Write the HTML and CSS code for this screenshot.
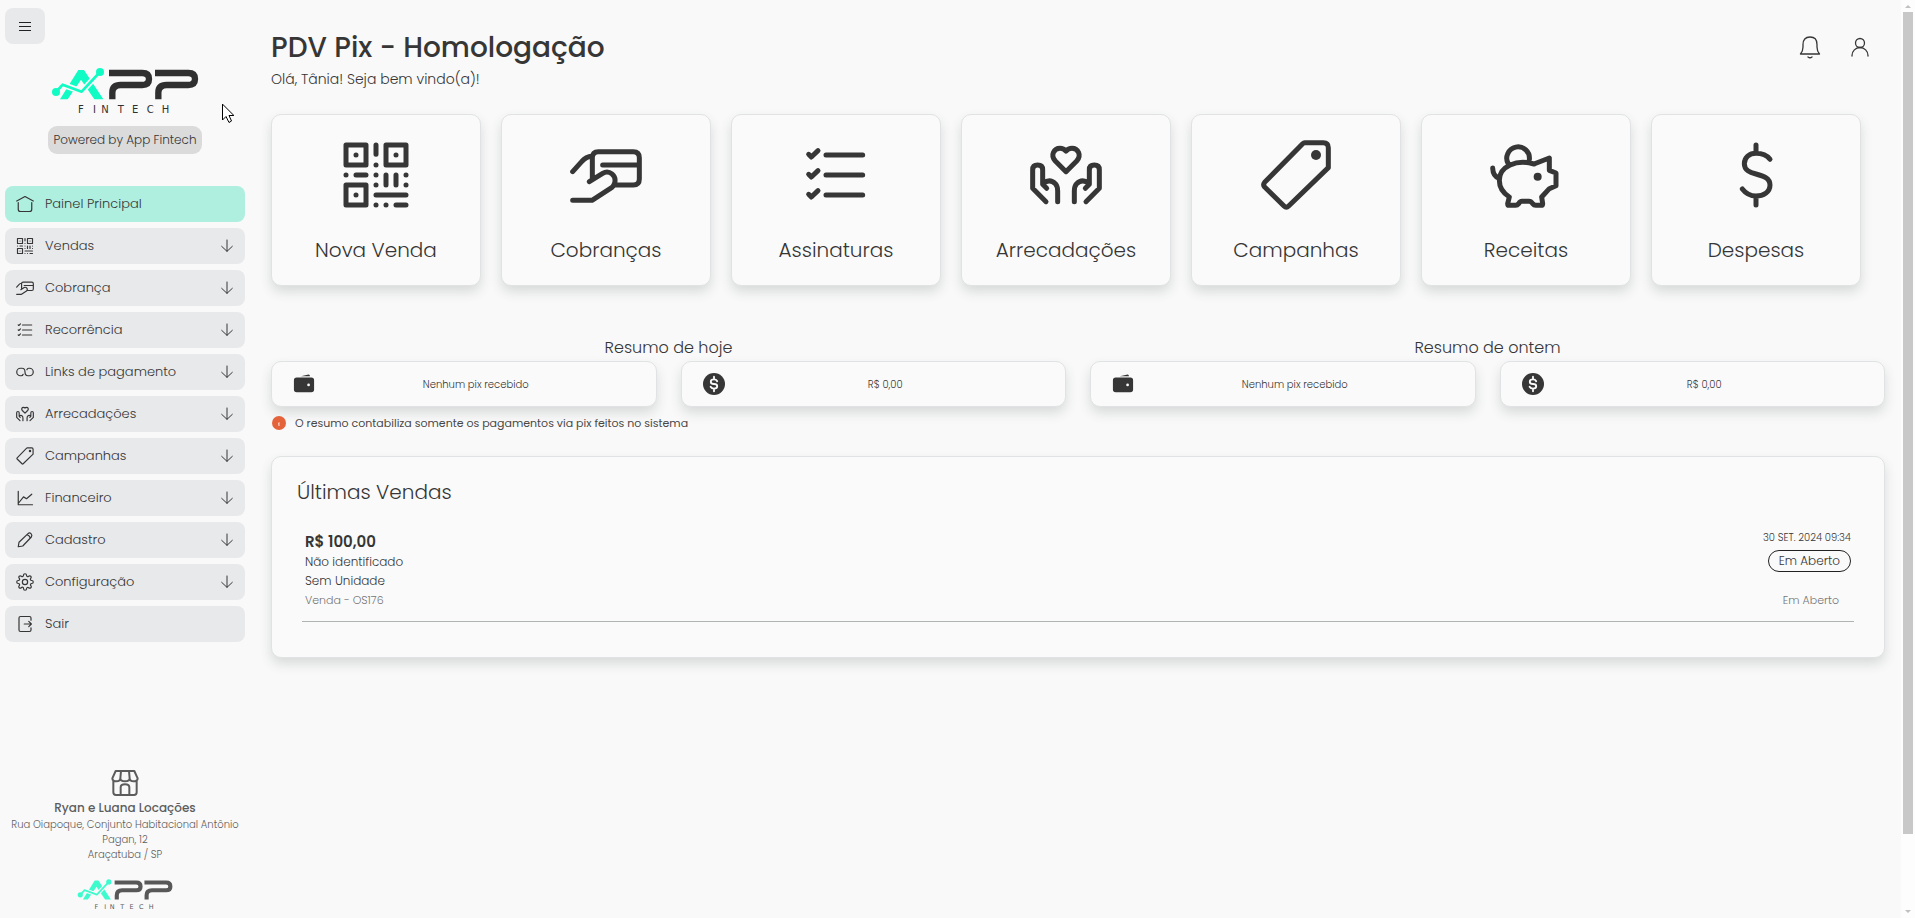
FILE: index.html
```
<!DOCTYPE html>
<html lang="pt-BR">
<head>
<meta charset="utf-8">
<meta name="viewport" content="width=device-width, initial-scale=1">
<title>PDV Pix - Homologação</title>
<link rel="stylesheet" href="styles.css">
</head>
<body>
<svg class="sprite" aria-hidden="true">
  <symbol id="qr" viewBox="0 0 216 216"><path d="M18 18H78V78H18ZM138 18H198V78H138ZM18 138H78V198H18ZM48 48h.1M168 48h.1M48 168h.1M108 18V46M108 78h.1M18 108h.1M48 108H78M108 108h.1M198 108h.1M138 108V138M168 108V138M108 138h.1M198 138h.1M108 168H198M108 198h.1M138 198h.1M168 198H198"/></symbol>
  <symbol id="card" viewBox="0 0 216 216"><path d="M8 98 35 68Q47 53 67 51M67 120V56Q67 38 85 38H190Q208 38 208 56V120Q208 138 190 138H135M98 78H208M58 128 98 103C118 91 140 110 134 132Q132 140 126 145L66 184H8"/></symbol>
  <symbol id="list" viewBox="0 0 216 216"><path d="M26 46 34 54 54 35M78 48H188M26 106 34 114 54 95M78 108H188M26 166 34 174 54 155M78 168H188"/></symbol>
  <symbol id="hands" viewBox="0 0 216 216"><path d="M108 98 76 66C60 48 72 28 90 28Q101 28 108 36Q115 28 126 28C144 28 156 48 140 66ZM48 188 8 148V92Q8 78 23 78Q38 78 38 92V136L50 148M40 132Q60 118 76 134Q83 142 83 156V188M168 188 208 148V92Q208 78 193 78Q178 78 178 92V136L166 148M176 132Q156 118 140 134Q133 142 133 156V188"/></symbol>
  <symbol id="tag" viewBox="0 0 216 216"><path d="M134 11H190Q205 11 205 26V86L86 201Q79 208 72 201L14 144Q8 137 14 130L128 14Q131 11 134 11Z"/><circle class="solid" cx="168" cy="48" r="15"/></symbol>
  <symbol id="pig" viewBox="0 0 216 216"><path d="M55 75A34 34 0 1 1 118 62M8 87Q9 112 27 118M132 75 178 57V94L198 102V140L178 149L155 174L158 194Q158 199 153 199H137Q132 199 128 194Q123 187 117 187H96Q90 187 86 194Q82 199 77 199H57Q53 199 53 194L58 174C42 164 28 146 28 124C28 82 80 60 132 75"/><circle class="solid" cx="143" cy="113" r="12"/></symbol>
  <symbol id="dollar" viewBox="0 0 216 216"><path d="M108 18V43M108 171V198M150 61C140 48 125 43 108 43C88 43 73 55 73 74C73 94 90 100 108 105C130 111 150 117 150 138C150 160 130 171 108 171C92 171 77 163 67 150"/></symbol>
  <symbol id="home" viewBox="0 0 24 24"><path d="M1 8 12 2 23 8M3 10V19Q3 22 6 22H18Q21 22 21 19V10"/></symbol>
  <symbol id="link" viewBox="0 0 24 24"><path d="M7 17H6A5 5 0 0 1 6 7H8C11 7 12 9 12 12S13 17 16 17H18A5 5 0 0 0 18 7H17Q15 7 14.500 9M7 17Q9 17 9.500 15"/></symbol>
  <symbol id="chart" viewBox="0 0 24 24"><path d="M3 3V21H22M4 18 10 10.500 14 13 21 7"/></symbol>
  <symbol id="pencil" viewBox="0 0 24 24"><path d="M3 21 4 15 16 3.500Q18 1.500 20 3.500T20.500 8L9 20ZM14.500 5Q18 5.500 19 9.500"/></symbol>
  <symbol id="gear" viewBox="0 0 24 24"><circle cx="12" cy="12" r="3.500"/><path d="M19.400 15a1.650 1.650 0 0 0 .33 1.820l.06.06a2 2 0 1 1-2.830 2.830l-.06-.06a1.650 1.650 0 0 0-2.800 1.170V21a2 2 0 0 1-4 0v-.09A1.650 1.650 0 0 0 7.200 19.600l-.06.06a2 2 0 1 1-2.830-2.830l.06-.06a1.650 1.650 0 0 0-1.280-2.770H3a2 2 0 0 1 0-4h.09A1.650 1.650 0 0 0 4.400 7.200l-.06-.06a2 2 0 1 1 2.830-2.830l.06.06A1.650 1.650 0 0 0 10 3.090V3a2 2 0 0 1 4 0v.09a1.650 1.650 0 0 0 2.770 1.280l.06-.06a2 2 0 1 1 2.830 2.830l-.06.06A1.650 1.650 0 0 0 20.910 10H21a2 2 0 0 1 0 4h-.09a1.650 1.650 0 0 0-1.510 1Z"/></symbol>
  <symbol id="exit" viewBox="0 0 24 24"><path d="M20 7V4Q20 2 18 2H6Q4 2 4 4V20Q4 22 6 22H18Q20 22 20 20V17M11 12H20M17 8.500 20.500 12 17 15.500"/></symbol>
  <symbol id="down" viewBox="0 0 24 24"><path d="M12 3V20M4 12.500 12 20 20 12.500"/></symbol>
  <symbol id="wallet" viewBox="0 0 24 24"><path class="solid" d="M8.500 3.500 17 1.500Q18.500 1.500 18.500 3.500ZM4 5H20Q23 5 23 8V18Q23 21 20 21H4Q1 21 1 18V8Q1 5 4 5Z"/><circle class="hole" cx="17" cy="13" r="1.500"/></symbol>
  <symbol id="coin" viewBox="0 0 24 24"><circle class="solid" cx="12" cy="12" r="12"/><path class="cut" d="M12 4V7M12 17V20M15.500 9Q14.500 7 12 7Q8.500 7 8.500 9.500T12 12T15.500 14.500T12 17Q9.500 17 8.300 15"/></symbol>
  <symbol id="logo" viewBox="0 0 450 162">
    <path class="teal" d="M85 12H102L160 100H133L93 41L53 100H30Z"/>
    <path class="gap" d="M18 78 38 56 95 77 150 18"/>
    <path class="trend" d="M18 78 38 56 95 77 150 18"/>
    <circle class="teal" cx="18" cy="78" r="12"/><circle class="teal" cx="150" cy="18" r="12"/>
    <path class="mark" d="M177 21H277Q297 21 297 39Q297 57 277 57H212Q187 57 187 80V100M315 21H415Q435 21 435 39Q435 57 415 57H350Q325 57 325 80V100"/>
    <text class="wordmark" y="142" x="84 129 154 203 246 290 335">FINTECH</text>
  </symbol>
</svg>

<div class="app">
  <aside class="sidebar">
    <button class="toggle" aria-label="Abrir menu"><svg viewBox="0 0 12 9"><path d="M0 .5H12M0 4.500H12M0 8.500H12"/></svg></button>
    <div class="brand">
      <svg class="logo" role="img" aria-label="App Fintech"><use href="#logo"/></svg>
      <span class="powered">Powered by App Fintech</span>
    </div>
    <nav class="menu">
      <a class="item active" href="#"><svg class="icon"><use href="#home"/></svg><span>Painel Principal</span></a>
      <button class="item"><svg class="icon wide"><use href="#qr"/></svg><span>Vendas</span><svg class="arrow"><use href="#down"/></svg></button>
      <button class="item"><svg class="icon wide"><use href="#card"/></svg><span>Cobrança</span><svg class="arrow"><use href="#down"/></svg></button>
      <button class="item"><svg class="icon wide"><use href="#list"/></svg><span>Recorrência</span><svg class="arrow"><use href="#down"/></svg></button>
      <button class="item"><svg class="icon"><use href="#link"/></svg><span>Links de pagamento</span><svg class="arrow"><use href="#down"/></svg></button>
      <button class="item"><svg class="icon wide"><use href="#hands"/></svg><span>Arrecadações</span><svg class="arrow"><use href="#down"/></svg></button>
      <button class="item"><svg class="icon wide"><use href="#tag"/></svg><span>Campanhas</span><svg class="arrow"><use href="#down"/></svg></button>
      <button class="item"><svg class="icon"><use href="#chart"/></svg><span>Financeiro</span><svg class="arrow"><use href="#down"/></svg></button>
      <button class="item"><svg class="icon"><use href="#pencil"/></svg><span>Cadastro</span><svg class="arrow"><use href="#down"/></svg></button>
      <button class="item"><svg class="icon"><use href="#gear"/></svg><span>Configuração</span><svg class="arrow"><use href="#down"/></svg></button>
      <a class="item" href="#"><svg class="icon"><use href="#exit"/></svg><span>Sair</span></a>
    </nav>
    <footer class="store">
      <svg class="shop" viewBox="0 0 84 78"><path d="M14 3H70L80 25Q80 34 68 34Q56 34 56 25Q56 34 42 34Q28 34 28 25Q28 34 16 34Q4 34 4 25ZM30 3 28 25M54 3 56 25M7 31V67Q7 75 15 75H69Q77 75 77 67V31M29 75V52Q29 43 42 43Q55 43 55 52V75"/></svg>
      <strong>Ryan e Luana Locações</strong>
      <p>Rua Oiapoque, Conjunto Habitacional Antônio Pagan, 12<br>Araçatuba / SP</p>
      <svg class="logo small" role="img" aria-label="App Fintech"><use href="#logo"/></svg>
    </footer>
    <svg class="pointer" viewBox="0 0 12 19" aria-hidden="true"><path d="M.5 .5V16L4 12.500 7 18.500 9.500 17 7 11.500H11.500Z"/></svg>
  </aside>

  <main class="main">
    <header class="top">
      <div>
        <h1>PDV Pix - Homologação</h1>
        <p>Olá, Tânia! Seja bem vindo(a)!</p>
      </div>
      <div class="actions">
        <button aria-label="Notificações"><svg viewBox="0 0 24 24"><path d="M2.500 19H21.500Q19 16 19 12V9.500Q19 2 12 2T5 9.500V12Q5 16 2.500 19ZM10 22Q12 23.500 14 22"/></svg></button>
        <button aria-label="Perfil"><svg viewBox="0 0 24 24"><circle cx="12" cy="8" r="4.500"/><path d="M4 21V20.500A8 8 0 0 1 20 20.500V21"/></svg></button>
      </div>
    </header>

    <section class="tiles" aria-label="Atalhos">
      <a class="box" href="#"><svg><use href="#qr"/></svg>Nova Venda</a>
      <a class="box" href="#"><svg><use href="#card"/></svg>Cobranças</a>
      <a class="box" href="#"><svg><use href="#list"/></svg>Assinaturas</a>
      <a class="box" href="#"><svg><use href="#hands"/></svg>Arrecadações</a>
      <a class="box" href="#"><svg><use href="#tag"/></svg>Campanhas</a>
      <a class="box" href="#"><svg><use href="#pig"/></svg>Receitas</a>
      <a class="box" href="#"><svg><use href="#dollar"/></svg>Despesas</a>
    </section>

    <div class="summaries">
      <section class="summary">
        <h2>Resumo de hoje</h2>
        <div class="box stat"><svg><use href="#wallet"/></svg><span>Nenhum pix recebido</span></div>
        <div class="box stat"><svg><use href="#coin"/></svg><span>R$ 0,00</span></div>
      </section>
      <section class="summary">
        <h2>Resumo de ontem</h2>
        <div class="box stat"><svg><use href="#wallet"/></svg><span>Nenhum pix recebido</span></div>
        <div class="box stat"><svg><use href="#coin"/></svg><span>R$ 0,00</span></div>
      </section>
    </div>
    <p class="note"><svg viewBox="0 0 14 14"><circle cx="7" cy="7" r="7"/><path d="M6 7 7.500 6V10H6.500Z"/></svg>O resumo contabiliza somente os pagamentos via pix feitos no sistema</p>

    <section class="box sales">
      <h2>Últimas Vendas</h2>
      <article class="sale">
        <div class="who">
          <strong>R$ 100,00</strong>
          <span>Não identificado</span>
          <span>Sem Unidade</span>
          <small>Venda - OS176</small>
        </div>
        <div class="state">
          <time datetime="2024-09-30T09:34">30 SET. 2024 09:34</time>
          <span class="badge">Em Aberto</span>
          <small>Em Aberto</small>
        </div>
      </article>
    </section>
  </main>

  <div class="scroll" aria-hidden="true"><i class="up"></i><div class="track"><div class="thumb"></div></div><i class="dn"></i></div>
</div>
</body>
</html>
```
FILE: styles.css
```
* { box-sizing: border-box; }

body {
  margin: 0;
  background: #f9f9f9;
  color: #363636;
  font-family: Poppins, Inter, "Liberation Sans", sans-serif;
  font-size: 13px;
  font-weight: 300;
}

h1, h2, p { margin: 0; font-weight: 300; }
a { color: inherit; text-decoration: none; }
button { border: 0; padding: 0; background: none; color: inherit; font: inherit; cursor: pointer; }
svg { flex: none; fill: none; stroke: #363636; stroke-linecap: round; stroke-linejoin: round; }
.sprite { position: absolute; width: 0; height: 0; }
.solid { fill: #363636; stroke: none; }
.hole { fill: #fafafa; stroke: none; }
.cut { stroke: #fafafa; stroke-width: 2; }

.app { display: flex; min-height: 100vh; }

/* Sidebar */
.sidebar {
  position: relative;
  display: flex;
  flex-direction: column;
  flex: none;
  width: 250px;
  padding: 8px 5px 5px;
}
.toggle {
  display: flex;
  align-items: center;
  justify-content: center;
  width: 40px;
  height: 36px;
  border-radius: 8px;
  background: #e8e9eb;
}
.toggle svg { width: 12px; height: 9px; stroke: #222; stroke-width: 1; stroke-linecap: butt; }
.brand { display: flex; flex-direction: column; align-items: center; margin: 22px 0 32px; }
.logo { width: 150px; height: 54px; }
.teal { fill: #10fcc4; stroke: none; }
.trend { stroke: #10fcc4; stroke-width: 8; }
.gap { stroke: #f9f9f9; stroke-width: 18; }
.mark { stroke: #303030; stroke-width: 19; stroke-linecap: butt; }
.wordmark { fill: #303030; stroke: none; font-family: "DejaVu Sans", sans-serif; font-size: 30px; font-weight: 400; }
.powered {
  margin-top: 6px;
  padding: 0 5px;
  border-radius: 9px;
  background: #dbdbdb;
  font-size: 12px;
  line-height: 28px;
}
.menu { display: flex; flex-direction: column; gap: 6px; }
.item {
  display: flex;
  align-items: center;
  gap: 11px;
  height: 36px;
  padding: 0 10px 0 11px;
  border-radius: 8px;
  background: #e8e9eb;
  text-align: left;
}
.item span { flex: 1; }
.active { background: #aeefdf; }
.icon { width: 18px; height: 18px; stroke-width: 1.600; }
.wide { stroke-width: 14; }
.arrow { width: 16px; height: 16px; stroke-width: 1.500; }
.store {
  display: flex;
  flex-direction: column;
  align-items: center;
  margin-top: auto;
  text-align: center;
  font-size: 10px;
  line-height: 15px;
  opacity: .8;
}
.store strong { margin: 4px 0 1px; font-size: 12px; line-height: 16px; font-weight: 500; }
.shop { width: 28px; height: 26px; stroke-width: 6; }
.small { width: 98px; height: 35px; margin-top: 16px; }
.pointer { position: absolute; left: 222px; top: 104px; width: 12px; height: 19px; fill: #fff; stroke: #000; }

/* Content */
.main { flex: 1; min-width: 0; padding: 30px 16px 40px 21px; }
.top { display: flex; justify-content: space-between; }
h1 { font-size: 28px; line-height: 36px; font-weight: 500; }
.top p { font-size: 14px; line-height: 20px; margin-top: 3px; }
.actions { display: flex; gap: 26px; padding: 5px 13px 0 0; align-self: flex-start; }
.actions svg { display: block; width: 24px; height: 24px; stroke-width: 1.300; }

.box {
  border: 1px solid #e1e2e3;
  border-radius: 10px;
  background: #fafafa;
  box-shadow: 0 6px 12px rgba(50, 60, 60, .16);
}
.tiles {
  display: grid;
  grid-template-columns: repeat(7, 1fr);
  gap: 20px;
  margin: 25px 24px 0 0;
}
.tiles .box {
  display: flex;
  flex-direction: column;
  align-items: center;
  padding: 24px 0 20px;
  font-size: 20px;
  line-height: 30px;
}
.tiles svg { width: 72px; height: 72px; margin-bottom: 24px; stroke-width: 15; }

.summaries { display: grid; grid-template-columns: 1fr 1fr; gap: 24px; margin-top: 49px; }
.summary { display: grid; grid-template-columns: 1fr 1fr; column-gap: 24px; }
.summary h2 { grid-column: 1 / -1; margin-bottom: 1px; text-align: center; font-size: 16px; line-height: 25px; }
.stat { display: flex; align-items: center; height: 46px; padding: 0 19px 0 21px; font-size: 10px; line-height: 16px; }
.stat svg { width: 22px; height: 22px; }
.stat span { flex: 1; padding-top: 1px; text-align: center; }
.note { display: flex; align-items: center; gap: 9px; margin-top: 8px; padding-left: 1px; color: #484848; font-size: 11px; line-height: 16px; font-weight: 400; }
.note svg { width: 14px; height: 14px; stroke: none; fill: #e4633a; }
.note path { fill: #fbd5c8; }

.sales { margin-top: 25px; padding: 20px 30px 35px 25px; }
.sales h2 { font-size: 20px; line-height: 30px; }
.sale {
  display: flex;
  justify-content: space-between;
  margin: 24px 0 0 5px;
  padding: 0 3px 11px;
  border-bottom: 1px solid #b0b3b3;
}
.who, .state { display: flex; flex-direction: column; font-size: 12px; }
.who { line-height: 19px; }
.who strong { font-size: 15px; line-height: 21px; font-weight: 600; }
.who small, .state small { font-size: 11px; color: #757575; line-height: 20px; }
.state { align-items: flex-end; }
.state time { font-size: 10px; line-height: 14px; }
.badge { margin-top: 5px; padding: 0 10px; border: 1px solid #222; border-radius: 11px; line-height: 20px; }
.state small { margin: auto 12px 0 0; }

/* Scroll bar */
.scroll { position: sticky; top: 0; display: flex; flex-direction: column; align-items: center; width: 14px; height: 100vh; padding: 5px 2px; background: #fdfdfd; }
.track { flex: 1; width: 10px; margin: 4px 0 5px; }
.thumb { height: 92%; background: #c8c8c8; }
.up, .dn { border: 3px solid transparent; }
.up { border-top: 0; border-bottom-color: #c0c0c0; }
.dn { border-bottom: 0; border-top-color: #c0c0c0; }
```
